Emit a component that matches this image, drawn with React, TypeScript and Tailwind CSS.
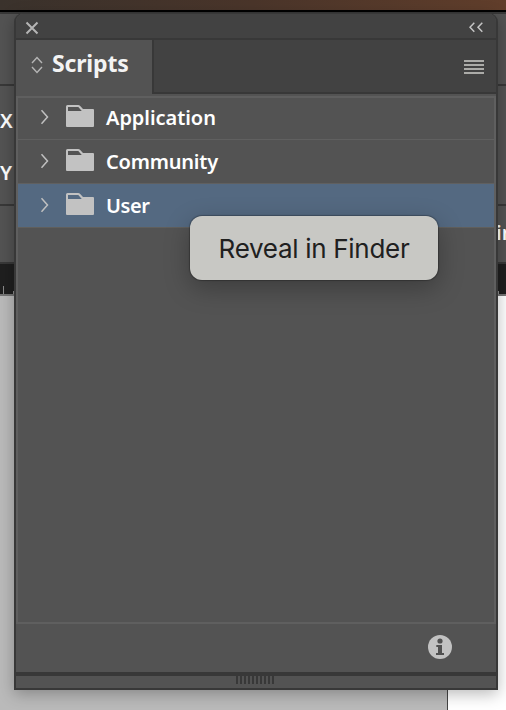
import React from "react";

function Chevron() {
  return (
    <svg width="10" height="16" viewBox="0 0 10 16" fill="none" stroke="#c0c0c0" strokeWidth="1.5">
      <path d="M1.5 1.2 7.5 8 1.5 14.8" />
    </svg>
  );
}

function Folder() {
  return (
    <svg width="28" height="22" viewBox="0 0 28 22">
      <path
        fill="#c2c2c2"
        fillRule="evenodd"
        d="M1.5 0H12.2Q13.3 0 14 .8L17 4H27Q28 4 28 5V21Q28 22 27 22H1Q0 22 0 21V1.5Q0 0 1.5 0ZM2 2V6H15.8L12.3 2Z"
      />
    </svg>
  );
}

type RowProps = { label: string; tracking: string; selected?: boolean };

function Row({ label, tracking, selected }: RowProps) {
  return (
    <div
      className={`flex h-11 shrink-0 items-start border-b pl-[22px] ${
        selected ? "border-[#605f5c] bg-[#546981]" : "border-[#606060]"
      }`}
    >
      <div className="mt-[13px] w-[26px]">
        <Chevron />
      </div>
      <div className="mt-[9px] w-10">
        <Folder />
      </div>
      <span className={`mt-[8px] text-[20px] leading-7 font-semibold text-white ${tracking}`}>{label}</span>
    </div>
  );
}

function Backdrop() {
  return (
    <div className="col-start-1 row-start-1 flex h-[710px] flex-col overflow-hidden">
      <div className="h-[10px] shrink-0 bg-linear-to-r from-[#3a322c] via-[#4a352a] to-[#613e2b]" />
      <div className="h-[2px] shrink-0 bg-black" />
      <div className="h-[2px] shrink-0 bg-[#383838]" />
      <div className="h-[72px] shrink-0 border-b-2 border-[#383838] bg-[#535353]" />
      <div className="flex h-[120px] shrink-0 flex-col border-b-2 border-[#383838] bg-[#535353] text-[20px] font-semibold text-white">
        <span className="mt-[20px] leading-[30px]">X</span>
        <span className="mt-[22px] leading-[30px]">Y</span>
      </div>
      <div className="flex h-[58px] shrink-0 justify-end border-b-2 border-[#383838] bg-[#535353]">
        <span className="mt-[12px] w-[10px] overflow-hidden text-[20px] leading-[30px] font-semibold text-white">in</span>
      </div>
      <div className="flex h-8 shrink-0 items-end border-b-2 border-[#757575] bg-[#1f1f1f]">
        <i className="ml-[3px] h-2 w-px bg-[#8b8b8b]" />
        <i className="ml-[9px] h-[3px] w-px bg-[#8b8b8b]" />
        <i className="ml-[484px] h-[3px] w-px bg-[#8b8b8b]" />
      </div>
      <div className="flex grow">
        <div className="w-[448px] border-r border-[#444] bg-[#bababa]" />
        <div className="grow bg-white" />
      </div>
    </div>
  );
}

function TabBar() {
  return (
    <div className="flex h-[54px] shrink-0">
      <div className="flex w-[136px] items-start bg-[#535353] pl-[15px]">
        <svg className="mt-4 shrink-0" width="12" height="18" viewBox="0 0 12 18" fill="none" stroke="#b5b5b5" strokeWidth="1.4">
          <path d="M1 7 6 1.5 11 7M1 11 6 16.5 11 11" />
        </svg>
        <span className="mt-[8px] ml-[9px] text-[23px] leading-[30px] font-bold tracking-[-0.15px] text-[#f3f3f3]">Scripts</span>
      </div>
      <div className="flex grow items-start justify-end border-b-2 border-l-2 border-[#383838] bg-[#424242] pr-3">
        <div className="mt-5 flex flex-col gap-[2px]">
          <i className="h-[2px] w-5 bg-[#ababa8]" />
          <i className="h-[2px] w-5 bg-[#ababa8]" />
          <i className="h-[2px] w-5 bg-[#ababa8]" />
          <i className="h-[2px] w-5 bg-[#ababa8]" />
        </div>
      </div>
    </div>
  );
}

function ContextMenu() {
  return (
    <div className="absolute top-[216px] left-[190px] z-20 flex h-16 w-[248px] items-center justify-center rounded-xl bg-[#c8c8c4] shadow-[0_0_1px_1px_rgba(0,0,0,0.25),0_8px_26px_rgba(0,0,0,0.28)]">
      <span className="pt-[2px] font-['Inter',sans-serif] text-[26px] leading-8 tracking-[-0.3px] whitespace-nowrap text-[#202020]">
        Reveal in Finder
      </span>
    </div>
  );
}

export default function App() {
  return (
    <div className="relative grid h-[710px] w-[506px] overflow-hidden font-['Noto_Sans','Open_Sans',sans-serif]">
      <Backdrop />
      <div className="z-10 col-start-1 row-start-1 mt-[13px] ml-[14px] flex h-[677px] w-[484px] flex-col overflow-hidden rounded-t-[9px] border-2 border-t border-[#383838] bg-[#535353] shadow-[0_4px_16px_rgba(0,0,0,0.28)]">
        <div className="flex h-[26px] shrink-0 items-start justify-between border-b-2 border-[#383838] bg-[#424242] pr-[13px] pl-[9px]">
          <svg className="mt-[7px]" width="14" height="14" viewBox="0 0 14 14" stroke="#b5b5b5" strokeWidth="2">
            <path d="M1.5 1.5 12.5 12.5M12.5 1.5 1.5 12.5" />
          </svg>
          <svg className="mt-2" width="14" height="11" viewBox="0 0 14 11" fill="none" stroke="#c4c4c4" strokeWidth="1.5">
            <path d="M5.3.7 1 5.2 5.3 9.8M13.3.7 9 5.2 13.3 9.8" />
          </svg>
        </div>
        <TabBar />
        <div className="mt-[2px] flex h-[528px] shrink-0 flex-col border-2 border-[#5f5f5f]">
          <div className="-mt-[2px] flex flex-col">
            <Row label="Application" tracking="tracking-[-0.05px]" />
            <Row label="Community" tracking="tracking-[-0.2px]" />
            <Row label="User" tracking="tracking-[-0.4px]" selected />
          </div>
        </div>
        <div className="flex h-12 shrink-0 items-start justify-end pr-11">
          <svg className="mt-[11px]" width="24" height="24" viewBox="0 0 24 24">
            <circle cx="12" cy="12" r="12" fill="#c2c2c2" />
            <circle cx="12" cy="6" r="2.6" fill="#505050" />
            <path d="M8.3 10H14V18H16V20H8V18H10V12H8.3Z" fill="#505050" />
          </svg>
        </div>
        <div className="h-1 shrink-0 bg-[#383838]" />
        <div className="flex h-3 shrink-0 justify-center gap-[2px] pr-[2px]">
          {Array.from({ length: 10 }, (_, i) => (
            <i key={i} className="h-2 w-[2px] bg-[#383838]" />
          ))}
        </div>
      </div>
      <ContextMenu />
    </div>
  );
}
